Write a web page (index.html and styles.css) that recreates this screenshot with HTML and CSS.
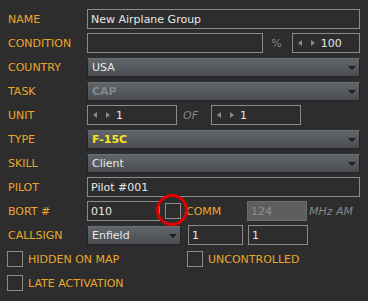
FILE: index.html
```html
<!DOCTYPE html>
<html lang="en">
  <head>
    <meta charset="UTF-8" />
    <title>Group</title>
    <link rel="stylesheet" href="styles.css">
  </head>
  <body>
    <main class="panel">
      <div class="row">
        <label class="lbl">NAME</label>
        <input class="field grow" type="text" value="New Airplane Group">
      </div>
      <div class="row">
        <label class="lbl">CONDITION</label>
        <input class="field cond" type="text" value="">
        <span class="unit-txt pct">%</span>
        <div class="spin cond-spin"><i class="tri left"></i><i class="tri right"></i><span>100</span></div>
      </div>
      <div class="row">
        <label class="lbl">COUNTRY</label>
        <div class="select grow"><span>USA</span><i class="arrow"></i></div>
      </div>
      <div class="row">
        <label class="lbl">TASK</label>
        <div class="select grow disabled"><span>CAP</span><i class="arrow"></i></div>
      </div>
      <div class="row">
        <label class="lbl">UNIT</label>
        <div class="spin unit-spin"><i class="tri left"></i><i class="tri right"></i><span>1</span></div>
        <span class="unit-txt of">OF</span>
        <div class="spin unit-spin"><i class="tri left"></i><i class="tri right"></i><span>1</span></div>
      </div>
      <div class="row">
        <label class="lbl">TYPE</label>
        <div class="select grow type"><span>F-15C</span><i class="arrow"></i></div>
      </div>
      <div class="row">
        <label class="lbl">SKILL</label>
        <div class="select grow"><span>Client</span><i class="arrow"></i></div>
      </div>
      <div class="row">
        <label class="lbl">PILOT</label>
        <input class="field grow" type="text" value="Pilot #001">
      </div>
      <div class="row">
        <label class="lbl">BORT #</label>
        <input class="field bort" type="text" value="010">
        <span class="box comm-box"></span>
        <span class="lbl-inline">COMM</span>
        <input class="field freq" type="text" value="124" disabled>
        <span class="unit-txt mhz">MHz AM</span>
        <svg class="mark" width="36" height="36" viewBox="0 0 36 36"><circle cx="18" cy="18" r="14.5" fill="none" stroke="#e40000" stroke-width="3"/></svg>
      </div>
      <div class="row">
        <label class="lbl">CALLSIGN</label>
        <div class="select callsign"><span>Enfield</span><i class="arrow"></i></div>
        <input class="field cs1" type="text" value="1">
        <input class="field cs2" type="text" value="1">
      </div>
      <div class="row checks">
        <div class="check first"><span class="box"></span><span>HIDDEN ON MAP</span></div>
        <div class="check"><span class="box"></span><span>UNCONTROLLED</span></div>
      </div>
      <div class="row checks">
        <div class="check first"><span class="box"></span><span>LATE ACTIVATION</span></div>
      </div>
    </main>
  </body>
</html>
```

FILE: styles.css
```css
* {
  margin: 0;
  padding: 0;
  box-sizing: border-box;
  font-family: "DejaVu Sans", sans-serif;
}
body {
  background-color: #2d2d2d;
  font-size: 11px;
  color: #e6e6e6;
}
.panel {
  padding: 9px 8px;
}
.row {
  display: flex;
  align-items: center;
  height: 20px;
  margin-bottom: 4px;
  position: relative;
}
.lbl {
  width: 79px;
  flex: none;
  color: #eba72b;
  font-size: 11px;
}
.lbl-inline {
  color: #eba72b;
  margin-left: 5px;
  width: 61px;
}
.grow {
  flex: 1;
}
.field {
  height: 20px;
  border: 1px solid #8b8b8b;
  background: transparent;
  color: #e6e6e6;
  font-size: 11px;
  padding: 0 3px;
  outline: none;
}
.field:disabled {
  background-color: #5e5e5e;
  border-color: #6c6c6c;
  color: #8e8e8e;
}
.cond { width: 178px; }
.bort { width: 73px; }
.freq { width: 60px; }
.cs1 { width: 55px; margin-left: 7px; }
.cs2 { width: 60px; margin-left: 5px; }
.unit-txt {
  color: #878787;
}
.pct { margin: 0 10px 0 8px; }
.of { font-style: italic; width: 34px; padding-left: 6px; }
.mhz { font-style: italic; margin-left: 2px; }
.spin {
  height: 20px;
  border: 1px solid #8b8b8b;
  display: flex;
  align-items: center;
  padding-left: 5px;
}
.cond-spin { width: 69px; }
.unit-spin { width: 90px; }
.spin span {
  margin-left: 6px;
}
.tri {
  width: 0;
  height: 0;
  border-top: 3.5px solid transparent;
  border-bottom: 3.5px solid transparent;
  margin-right: 9px;
}
.tri.left { border-right: 4px solid #8a8a8a; }
.tri.right { border-left: 4px solid #8a8a8a; margin-right: 0; }
.select {
  height: 19px;
  border: 1px solid #222426;
  border-top-color: #6b7074;
  background: linear-gradient(#60656a, #4a4e52);
  display: flex;
  align-items: center;
  justify-content: space-between;
  padding: 0 3px 0 4px;
  color: #e8e8e8;
}
.select.disabled span { color: #83878a; font-weight: bold; }
.select.type span { color: #f6e41c; font-weight: bold; }
.callsign { width: 94px; }
.arrow {
  width: 0;
  height: 0;
  border-left: 4px solid transparent;
  border-right: 4px solid transparent;
  border-top: 4px solid #1f2022;
  margin-top: 2px;
}
.box {
  width: 16px;
  height: 16px;
  border: 1px solid #8b8b8b;
  flex: none;
}
.comm-box { margin-left: 5px; }
.mark {
  position: absolute;
  left: 146px;
  top: -9px;
}
.checks {
  margin-left: -1px;
}
.check {
  display: flex;
  align-items: center;
  color: #eba72b;
}
.check.first { width: 180px; }
.check .box { margin-right: 5px; }
```
